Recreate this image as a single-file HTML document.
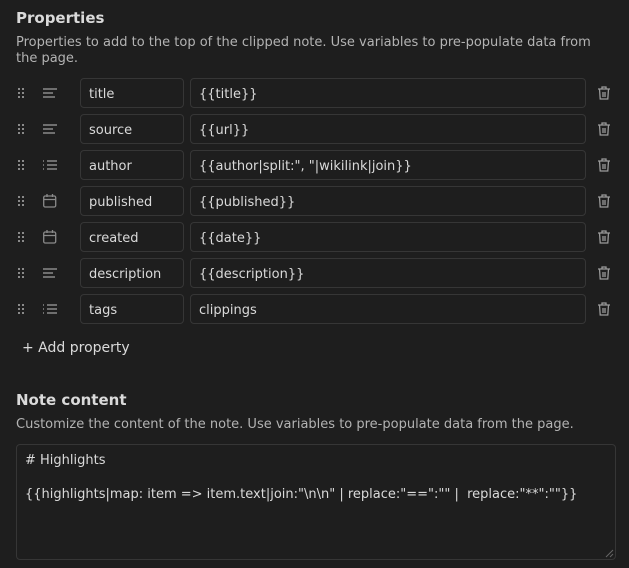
<!DOCTYPE html>
<html><head><style>
body{margin:0;background:#1e1e1e;width:629px;height:568px;overflow:hidden;font-family:"DejaVu Sans",sans-serif;color:#dadada;position:relative}
.h{position:absolute;left:16px;font-weight:bold;font-size:15px;color:#dadada}
.d{position:absolute;left:16px;font-size:13px;color:#b3b3b3;line-height:16px;width:590px}
.row{position:absolute;left:0;width:629px;height:30px}
.in{position:absolute;top:0;height:26px;padding-top:2px;border:1px solid #363636;border-radius:4px;background:#1e1e1e;font-size:13px;line-height:28px;padding-left:8px;box-sizing:content-box;color:#dadada;white-space:nowrap}
.n{left:80px;width:94px}
.v{left:190px;width:386px}
svg{position:absolute}
.ta{position:absolute;left:16px;top:444px;width:582px;height:98px;border:1px solid #363636;border-radius:4px;padding:7px 8px 9px;font-size:13px;line-height:17px;white-space:pre;color:#dadada}
</style></head><body>
<div class="h" style="top:9px">Properties</div>
<div class="d" style="top:35px">Properties to add to the top of the clipped note. Use variables to pre-populate data from the page.</div>

<svg width="0" height="0"><defs>
<g id="dots" fill="#8a8a8a"><rect x="0" y="0" width="2" height="2"/><rect x="4" y="0" width="2" height="2"/><rect x="0" y="4" width="2" height="2"/><rect x="4" y="4" width="2" height="2"/><rect x="0" y="8" width="2" height="2"/><rect x="4" y="8" width="2" height="2"/></g>
<g id="txt" stroke="#8a8a8a" stroke-width="1.5" fill="none"><path d="M0 1h14M0 5h10M0 9h12"/></g>
<g id="lst" stroke="#8a8a8a" stroke-width="1.5" fill="none"><path d="M4 1h10M4 5h10M4 9h10M0 1h1M0 5h1M0 9h1"/></g>
<g id="cal" stroke="#8a8a8a" stroke-width="1.3" fill="none"><rect x="0.7" y="2" width="12" height="11" rx="1.5"/><path d="M0.7 5.5h12M4 0v3M9.5 0v3"/></g>
<g id="tr" stroke="#9a9a9a" stroke-width="1.3" fill="none"><path d="M0 3h12M4 3V1h4v2M1.5 3l.7 10h7.6l.7-10M5 6v5M7 6v5"/></g>
</defs></svg>

<div class="row" style="top:78px"><svg style="left:18px;top:10px" width="6" height="10"><use href="#dots"/></svg><svg style="left:43px;top:10px" width="15" height="11"><use href="#txt"/></svg><div class="in n">title</div><div class="in v">{{title}}</div><svg style="left:598px;top:8px" width="13" height="15"><use href="#tr"/></svg></div>
<div class="row" style="top:114px"><svg style="left:18px;top:10px" width="6" height="10"><use href="#dots"/></svg><svg style="left:43px;top:10px" width="15" height="11"><use href="#txt"/></svg><div class="in n">source</div><div class="in v">{{url}}</div><svg style="left:598px;top:8px" width="13" height="15"><use href="#tr"/></svg></div>
<div class="row" style="top:150px"><svg style="left:18px;top:10px" width="6" height="10"><use href="#dots"/></svg><svg style="left:43px;top:10px" width="15" height="11"><use href="#lst"/></svg><div class="in n">author</div><div class="in v">{{author|split:", "|wikilink|join}}</div><svg style="left:598px;top:8px" width="13" height="15"><use href="#tr"/></svg></div>
<div class="row" style="top:186px"><svg style="left:18px;top:10px" width="6" height="10"><use href="#dots"/></svg><svg style="left:43px;top:8px" width="14" height="14"><use href="#cal"/></svg><div class="in n">published</div><div class="in v">{{published}}</div><svg style="left:598px;top:8px" width="13" height="15"><use href="#tr"/></svg></div>
<div class="row" style="top:222px"><svg style="left:18px;top:10px" width="6" height="10"><use href="#dots"/></svg><svg style="left:43px;top:8px" width="14" height="14"><use href="#cal"/></svg><div class="in n">created</div><div class="in v">{{date}}</div><svg style="left:598px;top:8px" width="13" height="15"><use href="#tr"/></svg></div>
<div class="row" style="top:258px"><svg style="left:18px;top:10px" width="6" height="10"><use href="#dots"/></svg><svg style="left:43px;top:10px" width="15" height="11"><use href="#txt"/></svg><div class="in n">description</div><div class="in v">{{description}}</div><svg style="left:598px;top:8px" width="13" height="15"><use href="#tr"/></svg></div>
<div class="row" style="top:294px"><svg style="left:18px;top:10px" width="6" height="10"><use href="#dots"/></svg><svg style="left:43px;top:10px" width="15" height="11"><use href="#lst"/></svg><div class="in n">tags</div><div class="in v">clippings</div><svg style="left:598px;top:8px" width="13" height="15"><use href="#tr"/></svg></div>

<div style="position:absolute;left:22px;top:340px;font-size:14px;color:#dadada">+ Add property</div>

<div class="h" style="top:391px">Note content</div>
<div class="d" style="top:417px">Customize the content of the note. Use variables to pre-populate data from the page.</div>
<div class="ta"># Highlights

{{highlights|map: item =&gt; item.text|join:"\n\n" | replace:"==":"" |  replace:"**":""}}</div>
<svg style="left:604px;top:548px" width="10" height="10"><path d="M9 2L2 9M9 6L6 9" stroke="#666" stroke-width="1"/></svg>
</body></html>
